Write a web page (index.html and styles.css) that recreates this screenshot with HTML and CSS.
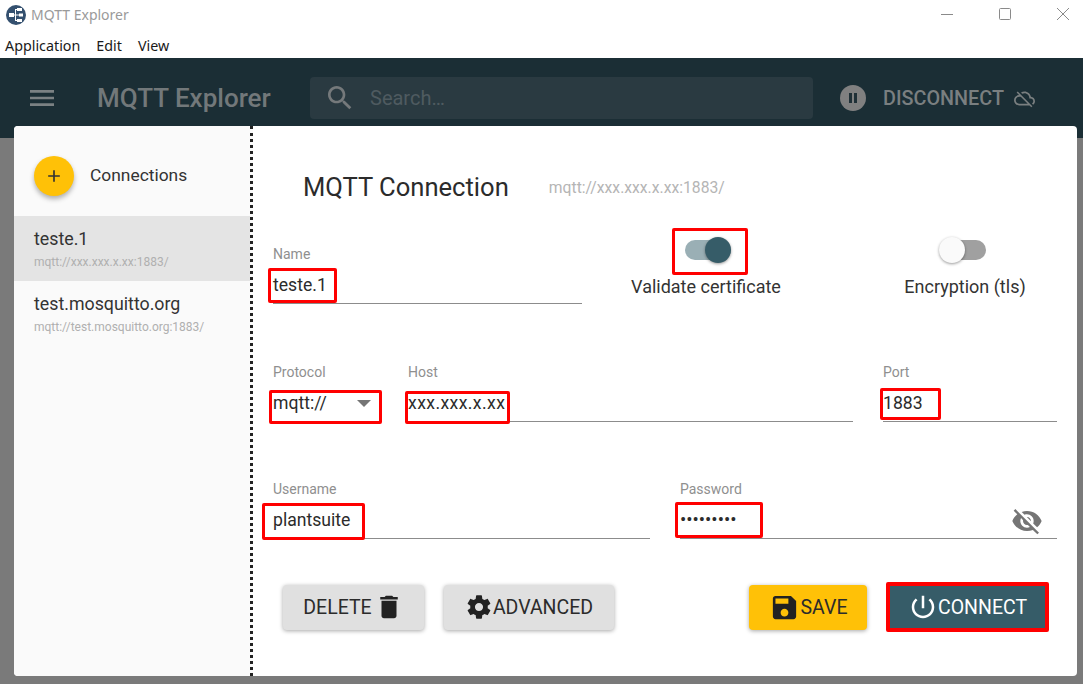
FILE: index.html
```html
<!doctype html>
<html lang="en">
<head>
    <meta charset="UTF-8">
    <link rel="stylesheet" href="styles.css">
    <title>MQTT Explorer</title>
</head>
<body>
<div class="titlebar">
    <svg class="logo" width="20" height="20" viewBox="0 0 20 20">
        <circle cx="10" cy="10" r="10" fill="#34506f"/>
        <g fill="#fff">
            <rect x="3" y="8" width="5" height="4"/>
            <rect x="11" y="3" width="5" height="3"/>
            <rect x="13" y="8.5" width="4" height="3"/>
            <rect x="11" y="14" width="5" height="3"/>
            <rect x="8" y="9.500" width="5" height="1"/>
            <rect x="9" y="4" width="1" height="12"/>
            <rect x="9" y="4" width="2" height="1"/>
            <rect x="9" y="15" width="2" height="1"/>
        </g>
    </svg>
    <span class="window-title">MQTT Explorer</span>
    <div class="window-buttons">
        <svg width="12" height="12" viewBox="0 0 12 12"><path d="M0 6.500h12" stroke="#8a8a8a" fill="none"/></svg>
        <svg width="12" height="12" viewBox="0 0 12 12"><rect x=".5" y=".5" width="11" height="11" rx="1" stroke="#8a8a8a" fill="none"/></svg>
        <svg width="12" height="12" viewBox="0 0 12 12"><path d="M0 0l12 12M12 0L0 12" stroke="#8a8a8a" fill="none"/></svg>
    </div>
</div>
<div class="menubar">
    <span>Application</span>
    <span>Edit</span>
    <span>View</span>
</div>
<header class="appbar">
    <svg class="menu-icon" width="32" height="32" viewBox="0 0 24 24"><path d="M3 18h18v-2H3v2zm0-5h18v-2H3v2zm0-7v2h18V6H3z"/></svg>
    <div class="app-title">MQTT Explorer</div>
    <div class="search">
        <svg width="32" height="32" viewBox="0 0 24 24"><path d="M15.500 14h-.79l-.28-.27C15.410 12.590 16 11.110 16 9.500 16 5.910 13.090 3 9.500 3S3 5.910 3 9.500 5.910 16 9.500 16c1.610 0 3.090-.59 4.230-1.570l.27.28v.79l5 4.990L20.490 19l-4.990-5zm-6 0C7.010 14 5 11.990 5 9.500S7.010 5 9.500 5 14 7.010 14 9.500 11.990 14 9.500 14z"/></svg>
        <span>Search…</span>
    </div>
    <div class="pause"><i></i><i></i></div>
    <div class="disconnect">DISCONNECT</div>
    <svg class="cloud-off" width="24" height="24" viewBox="0 0 24 24"><path d="M19.350 10.040C18.670 6.590 15.640 4 12 4c-1.480 0-2.850.43-4.010 1.170l1.460 1.460C10.210 6.230 11.080 6 12 6c3.040 0 5.500 2.460 5.500 5.500v.5H19c1.660 0 3 1.340 3 3 0 1.130-.64 2.110-1.560 2.620l1.450 1.450C23.160 18.160 24 16.680 24 15c0-2.640-2.050-4.780-4.650-4.960zM3 5.270l2.750 2.740C2.560 8.150 0 10.770 0 14c0 3.310 2.690 6 6 6h11.730l2 2L21 20.730 4.270 4 3 5.270zM7.730 10l8 8H6c-2.210 0-4-1.790-4-4s1.790-4 4-4h1.730z"/></svg>
</header>

<div class="dialog">
    <aside class="sidebar">
        <div class="sidebar-head">
            <div class="fab">
                <svg width="20" height="20" viewBox="0 0 24 24"><path d="M19 13h-6v6h-2v-6H5v-2h6V5h2v6h6v2z"/></svg>
            </div>
            <span>Connections</span>
        </div>
        <div class="conn conn-active">
            <div class="conn-name">teste.1</div>
            <div class="conn-url">mqtt://xxx.xxx.x.xx:1883/</div>
        </div>
        <div class="conn">
            <div class="conn-name">test.mosquitto.org</div>
            <div class="conn-url">mqtt://test.mosquitto.org:1883/</div>
        </div>
    </aside>

    <main class="form">
        <div class="form-head">
            <h2>MQTT Connection</h2>
            <span>mqtt://xxx.xxx.x.xx:1883/</span>
        </div>

        <div class="row row-top">
            <div class="field field-name">
                <label>Name</label>
                <div class="value">teste.1<b class="mark mark-name"></b></div>
            </div>
            <div class="toggle toggle-validate">
                <div class="switch switch-on"><i></i><b class="mark mark-switch"></b></div>
                <span>Validate certificate</span>
            </div>
            <div class="toggle toggle-tls">
                <div class="switch"><i></i></div>
                <span>Encryption (tls)</span>
            </div>
        </div>

        <div class="row">
            <div class="field field-protocol">
                <label>Protocol</label>
                <div class="value value-plain">mqtt://<i class="caret"></i><b class="mark mark-protocol"></b></div>
            </div>
            <div class="field field-host">
                <label>Host</label>
                <div class="value value-host">xxx.xxx.x.xx<b class="mark mark-host"></b></div>
            </div>
            <div class="field field-port">
                <label>Port</label>
                <div class="value">1883<b class="mark mark-port"></b></div>
            </div>
        </div>

        <div class="row row-auth">
            <div class="field field-half">
                <label>Username</label>
                <div class="value">plantsuite<b class="mark mark-user"></b></div>
            </div>
            <div class="field field-half">
                <label>Password</label>
                <div class="value value-pass">•••••••••
                    <svg class="eye" width="32" height="32" viewBox="0 0 24 24"><path d="M12 7c2.760 0 5 2.240 5 5 0 .65-.13 1.260-.36 1.830l2.920 2.920c1.510-1.260 2.700-2.890 3.430-4.750-1.730-4.390-6-7.500-11-7.500-1.400 0-2.740.25-3.980.7l2.160 2.160C10.740 7.130 11.350 7 12 7zM2 4.270l2.280 2.280.46.46C3.080 8.300 1.780 10.020 1 12c1.730 4.390 6 7.500 11 7.500 1.550 0 3.030-.3 4.380-.84l.42.42L19.730 22 21 20.730 3.270 3 2 4.270zM7.530 9.800l1.550 1.550c-.05.21-.08.43-.08.65 0 1.660 1.340 3 3 3 .22 0 .44-.03.65-.08l1.550 1.550c-.67.33-1.410.53-2.200.53-2.760 0-5-2.240-5-5 0-.79.2-1.530.53-2.200zm4.310-.78l3.150 3.150.02-.16c0-1.660-1.340-3-3-3l-.17.01z"/></svg>
                    <b class="mark mark-pass"></b>
                </div>
            </div>
        </div>

        <div class="actions">
            <button class="btn btn-delete">DELETE
                <svg width="30" height="30" viewBox="0 0 24 24"><path d="M6 19c0 1.100.9 2 2 2h8c1.100 0 2-.9 2-2V7H6v12zM19 4h-3.500l-1-1h-5l-1 1H5v2h14V4z"/></svg>
            </button>
            <button class="btn btn-advanced">
                <svg width="28" height="28" viewBox="0 0 24 24"><path d="M19.430 12.980c.04-.32.07-.64.07-.98s-.03-.66-.07-.98l2.110-1.650c.19-.15.24-.42.12-.64l-2-3.460c-.12-.22-.39-.3-.61-.22l-2.490 1c-.52-.4-1.080-.73-1.690-.98l-.38-2.650C14.460 2.180 14.250 2 14 2h-4c-.25 0-.46.18-.49.42l-.38 2.650c-.61.25-1.170.59-1.690.98l-2.490-1c-.23-.09-.49 0-.61.22l-2 3.460c-.13.22-.07.49.12.64l2.110 1.650c-.04.32-.07.65-.07.98s.03.66.07.98l-2.110 1.650c-.19.15-.24.42-.12.64l2 3.460c.12.22.39.3.61.22l2.490-1c.52.4 1.080.73 1.690.98l.38 2.650c.03.24.24.42.49.42h4c.25 0 .46-.18.49-.42l.38-2.650c.61-.25 1.170-.59 1.690-.98l2.490 1c.23.09.49 0 .61-.22l2-3.460c.12-.22.07-.49-.12-.64l-2.110-1.650zM12 15.500c-1.930 0-3.500-1.570-3.500-3.500s1.570-3.500 3.500-3.500 3.500 1.570 3.500 3.500-1.570 3.500-3.500 3.500z"/></svg>
                ADVANCED
            </button>
            <button class="btn btn-save">
                <svg width="31" height="31" viewBox="0 0 24 24"><path d="M17 3H5c-1.110 0-2 .9-2 2v14c0 1.100.89 2 2 2h14c1.100 0 2-.9 2-2V7l-4-4zm-5 16c-1.660 0-3-1.340-3-3s1.340-3 3-3 3 1.340 3 3-1.340 3-3 3zm3-10H5V5h10v4z"/></svg>
                SAVE
            </button>
            <button class="btn btn-connect">
                <svg width="30" height="30" viewBox="0 0 24 24"><path d="M13 3h-2v10h2V3zm4.830 2.170l-1.420 1.420C17.990 7.860 19 9.810 19 12c0 3.870-3.130 7-7 7s-7-3.130-7-7c0-2.190 1.010-4.140 2.580-5.420L6.170 5.170C4.230 6.820 3 9.260 3 12c0 4.970 4.030 9 9 9s9-4.030 9-9c0-2.740-1.230-5.180-3.170-6.830z"/></svg>
                CONNECT
            </button>
        </div>
    </main>
</div>
</body>
</html>
```

FILE: styles.css
```css
* {
    box-sizing: border-box;
}

body {
    margin: 0;
    height: 684px;
    overflow: hidden;
    background: #7a7a7a;
    font-family: Roboto, sans-serif;
    position: relative;
}

.titlebar {
    height: 32px;
    background: #fff;
    display: flex;
    align-items: center;
    padding-left: 6px;
}

.logo {
    margin-right: 5px;
    margin-top: -2px;
}

.window-title {
    font: 14px "Noto Sans", sans-serif;
    color: #9a9a9a;
    margin-top: -4px;
}

.window-buttons {
    margin-left: auto;
    display: flex;
    gap: 46px;
    padding-right: 14px;
    margin-top: -4px;
}

.menubar {
    height: 26px;
    background: #fff;
    display: flex;
    align-items: center;
    gap: 16px;
    padding-left: 5px;
    font: 14.3px "Noto Sans", sans-serif;
    color: #1a1a1a;
}

.appbar {
    height: 80px;
    background: #1b2e35;
    display: flex;
    align-items: center;
    padding: 0 47px 0 26px;
}

.menu-icon {
    fill: #7b8183;
}

.app-title {
    margin-left: 39px;
    width: 213px;
    font-size: 26px;
    font-weight: 500;
    color: #72787a;
    white-space: nowrap;
}

.search {
    width: 503px;
    height: 42px;
    border-radius: 4px;
    background: #2a3a41;
    display: flex;
    align-items: center;
    padding-left: 14px;
    fill: #75797b;
    color: #4f5b60;
    font-size: 20px;
    gap: 14px;
    flex: none;
}

.pause {
    width: 26px;
    height: 26px;
    border-radius: 50%;
    background: #808080;
    margin-left: 27px;
    display: flex;
    align-items: center;
    justify-content: center;
    gap: 2px;
    flex: none;
}

.pause i {
    width: 3px;
    height: 10px;
    background: #1f3037;
}

.disconnect {
    margin-left: 17px;
    font-size: 19.8px;
    font-weight: 500;
    color: #7a7f80;
}

.cloud-off {
    margin-left: 10px;
    width: 21px;
    height: 21px;
    fill: #7a7f80;
    flex: none;
}

/* dialog sits on top of the app bar */
.dialog {
    position: absolute;
    left: 14px;
    top: 126px;
    width: 1063px;
    height: 550px;
    background: #fff;
    border-radius: 4px;
    display: flex;
    overflow: hidden;
}

.sidebar {
    width: 239px;
    background: #fafafa;
    border-right: 3px dotted #222;
    flex: none;
}

.sidebar-head {
    height: 90px;
    display: flex;
    align-items: center;
    padding: 10px 0 0 20px;
    gap: 16px;
    font-size: 17.4px;
    color: #333;
}

.sidebar-head span {
    margin-top: -2px;
}

.fab {
    width: 40px;
    height: 40px;
    border-radius: 50%;
    background: #ffc107;
    box-shadow: 0 3px 5px rgba(0, 0, 0, .3);
    display: flex;
    align-items: center;
    justify-content: center;
    fill: #333;
}

.conn {
    height: 65px;
    padding: 12px 20px 0;
}

.conn-active {
    background: #e4e4e4;
}

.conn-name {
    font-size: 17.8px;
    color: #333;
}

.conn-url {
    margin-top: 6px;
    font-size: 12px;
    color: #b0b0b0;
}

.form {
    flex: 1;
    padding: 0 20px 0 20px;
    color: #2b2b2b;
}

.form-head {
    display: flex;
    align-items: center;
    height: 36px;
    margin-top: 43px;
    padding-left: 30px;
}

.form-head h2 {
    margin: 0;
    font-size: 25.6px;
    font-weight: 400;
    color: #2b2b2b;
}

.form-head span {
    margin-left: 40px;
    font-size: 15.7px;
    color: #b5b5b5;
}

.row {
    display: flex;
    gap: 30px;
}

.row-top {
    height: 118px;
    margin-top: 41px;
    gap: 0;
}

.row-auth {
    margin-top: 59px;
}

.field label {
    display: block;
    height: 29px;
    font-size: 14px;
    color: #8f8f8f;
}

.value {
    position: relative;
    height: 29px;
    border-bottom: 1px solid #8c8c8c;
    font-size: 17.6px;
    line-height: 21px;
    color: #2b2b2b;
}

.value-plain {
    border-bottom: 0;
}

.value-host {
    letter-spacing: .4px;
}

.value-pass {
    font-size: 18.6px;
}

.field-name {
    width: 309px;
}

.field-protocol {
    width: 105px;
}

.field-host {
    width: 445px;
}

.field-port {
    width: 174px;
}

.field-half {
    width: 377px;
}

.toggle {
    display: flex;
    flex-direction: column;
    align-items: center;
    font-size: 18px;
    color: #333;
    white-space: nowrap;
}

.toggle-validate {
    margin-left: 50px;
    width: 148px;
}

.toggle-tls {
    margin-left: 123px;
    width: 124px;
}

.switch {
    position: relative;
    width: 46px;
    height: 20px;
    margin: -6px 4px 16px 0;
    border-radius: 10px;
    background: #a0a0a0;
    flex: none;
}

.switch i {
    position: absolute;
    left: -1px;
    top: -3px;
    width: 26px;
    height: 26px;
    border-radius: 50%;
    background: #fafafa;
    box-shadow: 0 1px 3px rgba(0, 0, 0, .4);
}

.switch-on {
    margin: -6px 0 16px 4px;
    background: #9aafb5;
}

.switch-on i {
    left: auto;
    right: 0;
    background: #365c68;
}

.caret {
    position: absolute;
    right: 7px;
    top: 7px;
    border: 7px solid transparent;
    border-top-color: #757575;
    border-bottom: 0;
}

.eye {
    position: absolute;
    right: 14px;
    top: -5px;
    fill: #757575;
}

/* red annotation boxes drawn over the fields */
.mark {
    position: absolute;
    border: 3px solid #f00;
    border-radius: 2px;
}

.mark-name { left: -5px; top: -7px; width: 69px; height: 35px; }
.mark-protocol { left: -4px; top: -3px; width: 113px; height: 34px; }
.mark-host { left: -3px; top: -2px; width: 105px; height: 33px; }
.mark-port { left: -3px; top: -5px; width: 61px; height: 32px; }
.mark-user { left: -11px; top: -7px; width: 103px; height: 37px; }
.mark-pass { left: -5px; top: -8px; width: 88px; height: 36px; }
.mark-switch { left: -13px; top: -12px; width: 76px; height: 47px; }

.actions {
    display: flex;
    align-items: center;
    margin-top: 43px;
    padding-left: 10px;
}

.btn {
    height: 45px;
    border: 0;
    border-radius: 4px;
    background: #e0e0e0;
    color: #2b2b2b;
    font-family: Roboto, sans-serif;
    font-size: 19.5px;
    display: flex;
    align-items: center;
    justify-content: center;
    box-shadow: 0 1px 4px rgba(0, 0, 0, .35);
    padding: 0;
    fill: #222;
}

.btn-delete {
    width: 141px;
    gap: 2px;
}

.btn-advanced {
    width: 170px;
    margin-left: 20px;
}

.btn-save {
    width: 118px;
    margin-left: 135px;
    background: #ffc107;
    gap: 1px;
}

.btn-connect {
    width: 163px;
    height: 50px;
    margin-left: 19px;
    background: #365c68;
    color: #fff;
    fill: #fff;
    border: 4px solid #f00;
    border-radius: 2px;
    box-shadow: none;
}
```
